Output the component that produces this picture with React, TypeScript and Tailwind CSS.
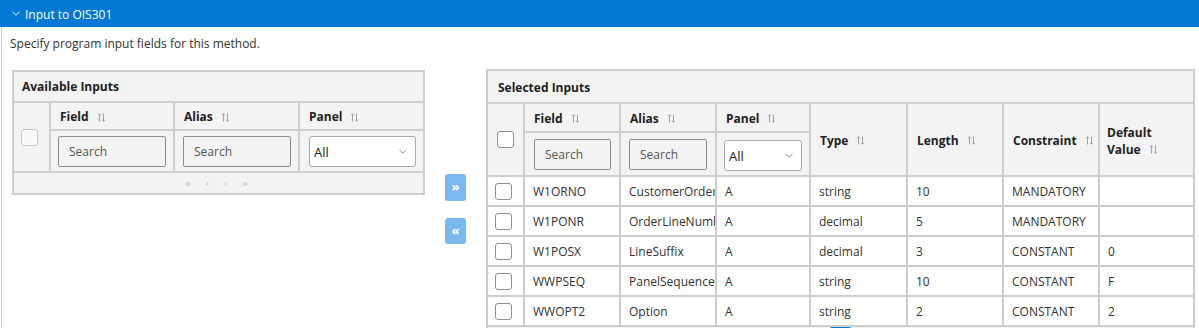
import React from "react";

const SortIcon = () => (
  <svg width="7" height="9" viewBox="0 0 7 9" fill="none" stroke="#a0a0a0" strokeWidth="1" className="ml-[9px] shrink-0">
    <path d="M1.5 8.5V0.8M0 2.3L1.5 0.8L3 2.3" />
    <path d="M5.5 0.5V8.2M4 6.7L5.5 8.2L7 6.7" />
  </svg>
);

const Chevron = ({ color = "#8a8a8a" }: { color?: string }) => (
  <svg width="8" height="5" viewBox="0 0 8 5" fill="none" stroke={color} strokeWidth="1">
    <path d="M0.5 0.8L4 4.2L7.5 0.8" />
  </svg>
);

const Checkbox = ({ light = false }: { light?: boolean }) => (
  <div
    className={
      light
        ? "w-[17px] h-[17px] rounded-[3px] border border-[#c4c4c4] bg-[#fafafa]"
        : "w-[17px] h-[17px] rounded-[3px] border border-[#8f8f8f] bg-white"
    }
  />
);

const SearchBox = ({ w }: { w: string }) => (
  <div className={`${w} h-[31px] border border-[#8c8c8c] rounded-[2px] flex items-center pl-[10px] pt-[2px] text-[#555]`}>
    Search
  </div>
);

const SelectBox = ({ w }: { w: string }) => (
  <div className={`${w} h-[31px] border border-[#a8a8a8] rounded-[3px] bg-white flex items-center justify-between pl-[4px] pr-[8px] text-[#222] text-[13px]`}>
    <span className="mt-[3px]">All</span>
    <Chevron />
  </div>
);

const Hdr = ({ label, className = "" }: { label: string; className?: string }) => (
  <div className={`bg-[#f3f3f3] flex items-center pl-[9px] pt-[2px] font-bold text-[#222] ${className}`}>
    <span>{label}</span>
    <SortIcon />
  </div>
);

const rows = [
  ["W1ORNO", "CustomerOrderNumber", "A", "string", "10", "MANDATORY", ""],
  ["W1PONR", "OrderLineNumber", "A", "decimal", "5", "MANDATORY", ""],
  ["W1POSX", "LineSuffix", "A", "decimal", "3", "CONSTANT", "0"],
  ["WWPSEQ", "PanelSequence", "A", "string", "10", "CONSTANT", "F"],
  ["WWOPT2", "Option", "A", "string", "2", "CONSTANT", "2"],
];

export default function App() {
  return (
    <div
      className="w-[1199px] h-[328px] overflow-hidden bg-white text-[12px] text-[#333]"
      style={{ fontFamily: '"Open Sans", "Noto Sans", sans-serif' }}
    >
      <div className="h-[27px] bg-[#0078d4] flex items-center pl-[12px] text-white">
        <Chevron color="#ffffff" />
        <span className="ml-[5px] leading-[16px] pt-[2px]">Input to OIS301</span>
      </div>
      <div className="ml-px border-l border-[#d0d0d0] h-[301px]">
        <div className="pt-[9px] pl-[8px] leading-[16px]">Specify program input fields for this method.</div>
        <div className="flex items-start mt-[17px] pl-[10px]">
          {/* Available Inputs */}
          <div className="mt-px w-[413px] bg-[#cdcdcd] p-[2px] grid grid-cols-[35px_122px_123px_123px] grid-rows-[29px_26px_40px_20px] gap-[2px]">
            <div className="col-span-4 bg-[#f3f3f3] flex items-center pl-[8px] pt-[1px] font-bold text-[#222]">Available Inputs</div>
            <div className="row-span-2 bg-[#f3f3f3] flex items-center pl-[7px]">
              <Checkbox light />
            </div>
            <Hdr label="Field" />
            <Hdr label="Alias" />
            <Hdr label="Panel" />
            <div className="bg-[#f3f3f3] flex items-center pl-[7px]">
              <SearchBox w="w-[108px]" />
            </div>
            <div className="bg-[#f3f3f3] flex items-center pl-[8px]">
              <SearchBox w="w-[108px]" />
            </div>
            <div className="bg-[#f3f3f3] flex items-center pl-[9px]">
              <SelectBox w="w-[107px]" />
            </div>
            <div className="col-span-4 bg-[#f3f3f3] flex items-center justify-center gap-[15px] text-[11px] text-[#c0c0c0] pr-[4px]">
              <span>«</span>
              <span>‹</span>
              <span>›</span>
              <span>»</span>
            </div>
          </div>

          {/* Move buttons */}
          <div className="w-[61px] flex flex-col pl-[20px] pt-[105px] gap-[17px]">
            <div className="w-[21px] h-[27px] rounded-[3px] bg-[#7ab8ee] flex items-center justify-center text-white font-bold text-[13px] leading-none pb-[2px]">»</div>
            <div className="w-[21px] h-[26px] rounded-[3px] bg-[#7ab8ee] flex items-center justify-center text-white font-bold text-[13px] leading-none pb-[2px]">«</div>
          </div>

          {/* Selected Inputs */}
          <div className="w-[709px] bg-[#cdcdcd] p-[2px] grid grid-cols-[35px_94px_94px_92px_95px_94px_94px_93px] grid-rows-[31px_27px_42px_28px_28px_28px_28px_28px_20px] gap-[2px]">
            <div className="col-span-8 bg-[#f3f3f3] flex items-center pl-[10px] pt-[2px] font-bold text-[#222]">Selected Inputs</div>
            <div className="row-span-2 bg-[#f3f3f3] flex items-center pl-[9px]">
              <Checkbox />
            </div>
            <Hdr label="Field" />
            <Hdr label="Alias" />
            <Hdr label="Panel" />
            <Hdr label="Type" className="row-span-2" />
            <Hdr label="Length" className="row-span-2" />
            <Hdr label="Constraint" className="row-span-2" />
            <div className="row-span-2 bg-[#f3f3f3] flex flex-col justify-center pl-[7px] pt-[2px] font-bold text-[#222] leading-[17px]">
              <span>Default</span>
              <span className="flex items-center">
                Value
                <SortIcon />
              </span>
            </div>
            <div className="bg-[#f3f3f3] flex items-center pl-[9px]">
              <SearchBox w="w-[77px]" />
            </div>
            <div className="bg-[#f3f3f3] flex items-center pl-[8px]">
              <SearchBox w="w-[78px]" />
            </div>
            <div className="bg-[#f3f3f3] flex items-center pl-[7px] pt-[2px]">
              <SelectBox w="w-[78px]" />
            </div>
            {rows.map((r) => (
              <React.Fragment key={r[0]}>
                <div className="bg-white flex items-center pl-[7px]">
                  <Checkbox />
                </div>
                {r.map((c, i) => (
                  <div key={i} className="bg-white flex items-center pl-[8px] pt-[2px] overflow-hidden whitespace-nowrap">
                    {c}
                  </div>
                ))}
              </React.Fragment>
            ))}
            <div className="col-span-8 bg-[#f3f3f3] flex justify-center">
              <div className="w-[21px] h-[20px] bg-[#0078d4] rounded-[2px]" />
            </div>
          </div>
        </div>
      </div>
    </div>
  );
}
